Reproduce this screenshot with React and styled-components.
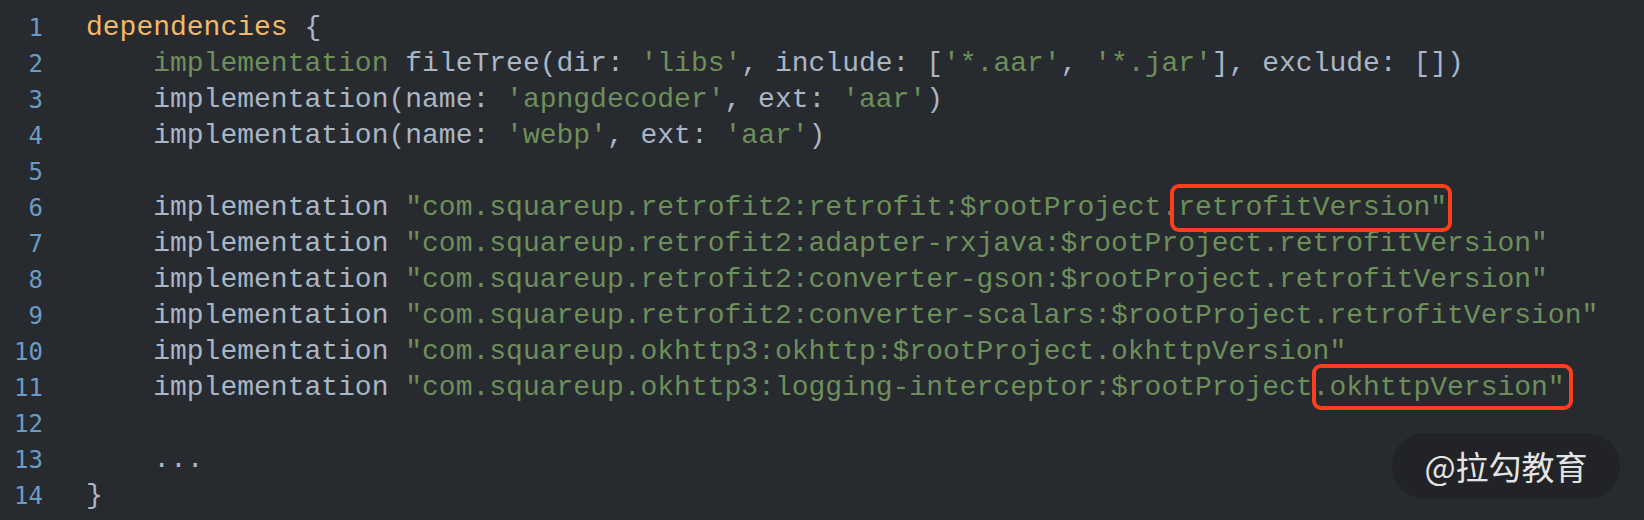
import React from "react";
import styled, { createGlobalStyle } from "styled-components";

const GlobalStyle = createGlobalStyle`
  html, body {
    margin: 0;
    padding: 0;
    background: #272a2e;
  }
`;

const lines = [
  [["kw", "dependencies"], ["txt", " {"]],
  [
    ["txt", "    "],
    ["str", "implementation"],
    ["txt", " fileTree(dir: "],
    ["str", "'libs'"],
    ["txt", ", include: ["],
    ["str", "'*.aar'"],
    ["txt", ", "],
    ["str", "'*.jar'"],
    ["txt", "], exclude: [])"],
  ],
  [
    ["txt", "    implementation(name: "],
    ["str", "'apngdecoder'"],
    ["txt", ", ext: "],
    ["str", "'aar'"],
    ["txt", ")"],
  ],
  [
    ["txt", "    implementation(name: "],
    ["str", "'webp'"],
    ["txt", ", ext: "],
    ["str", "'aar'"],
    ["txt", ")"],
  ],
  [],
  [
    ["txt", "    implementation "],
    ["str", '"com.squareup.retrofit2:retrofit:$rootProject.'],
    ["mark1", 'retrofitVersion"'],
  ],
  [
    ["txt", "    implementation "],
    ["str", '"com.squareup.retrofit2:adapter-rxjava:$rootProject.retrofitVersion"'],
  ],
  [
    ["txt", "    implementation "],
    ["str", '"com.squareup.retrofit2:converter-gson:$rootProject.retrofitVersion"'],
  ],
  [
    ["txt", "    implementation "],
    ["str", '"com.squareup.retrofit2:converter-scalars:$rootProject.retrofitVersion"'],
  ],
  [
    ["txt", "    implementation "],
    ["str", '"com.squareup.okhttp3:okhttp:$rootProject.okhttpVersion"'],
  ],
  [
    ["txt", "    implementation "],
    ["str", '"com.squareup.okhttp3:logging-interceptor:$rootProject.'],
    ["mark2", 'okhttpVersion"'],
  ],
  [],
  [["txt", "    ..."]],
  [["txt", "}"]],
];

const marks = {
  mark1: { top: -8, bottom: -9, left: -8, right: -5 },
  mark2: { top: -8, bottom: -7, left: -17, right: -8 },
};

export default function App() {
  return (
    <>
      <GlobalStyle />
      <Editor>
        {lines.map((parts, i) => (
          <Row key={i}>
            <LineNo>{i + 1}</LineNo>
            <Code>
              {parts.map(([kind, text], j) =>
                marks[kind] ? (
                  <Mark key={j} {...marks[kind]}>
                    {text}
                  </Mark>
                ) : (
                  <Token key={j} kind={kind}>
                    {text}
                  </Token>
                )
              )}
            </Code>
          </Row>
        ))}
        <Watermark>@拉勾教育</Watermark>
      </Editor>
    </>
  );
}

const colors = {
  kw: "#f3b968",
  str: "#6d8f5b",
  txt: "#a9b6c5",
};

const Editor = styled.div`
  position: relative;
  height: 520px;
  box-sizing: border-box;
  padding-top: 10px;
  background: #272a2e;
  overflow: hidden;
`;

const Row = styled.div`
  display: grid;
  grid-template-columns: 43px 1fr;
  column-gap: 43px;
  height: 36px;
  align-items: center;
`;

const LineNo = styled.div`
  font-family: "DejaVu Sans Mono", monospace;
  font-size: 24px;
  color: #6b9cc5;
  text-align: right;
`;

const Code = styled.div`
  font-family: "Liberation Mono", "Courier New", monospace;
  font-size: 28px;
  line-height: 36px;
  white-space: pre;
  color: #a9b6c5;
`;

const Token = styled.span`
  color: ${(p) => colors[p.kind]};
`;

const Mark = styled.span`
  position: relative;
  color: #6d8f5b;
  &::after {
    content: "";
    position: absolute;
    top: ${(p) => p.top}px;
    bottom: ${(p) => p.bottom}px;
    left: ${(p) => p.left}px;
    right: ${(p) => p.right}px;
    border: 4.5px solid #ff3e1e;
    border-radius: 9px;
  }
`;

const Watermark = styled.div`
  position: absolute;
  right: 24px;
  bottom: 21px;
  width: 228px;
  height: 66px;
  border-radius: 33px;
  background: #212326;
  display: flex;
  align-items: center;
  justify-content: center;
  font-family: "Noto Sans CJK SC", "Noto Sans", sans-serif;
  font-size: 33px;
  color: #e4e4e4;
`;
